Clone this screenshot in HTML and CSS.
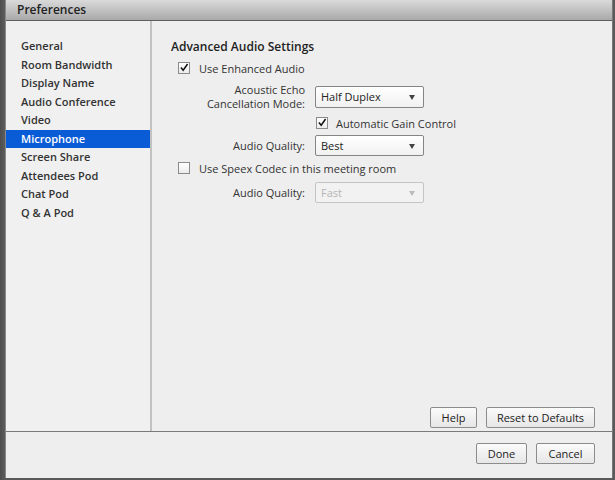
FILE: index.html
```html
<!DOCTYPE html>
<html>
<head>
<meta charset="utf-8">
<link rel="stylesheet" href="styles.css">
</head>
<body>
<div class="screen">
  <div class="dialog">
    <div class="titlebar">Preferences</div>
    <div class="main">
      <ul class="nav">
        <li>General</li>
        <li>Room Bandwidth</li>
        <li>Display Name</li>
        <li>Audio Conference</li>
        <li>Video</li>
        <li class="active">Microphone</li>
        <li>Screen Share</li>
        <li>Attendees Pod</li>
        <li>Chat Pod</li>
        <li>Q &amp; A Pod</li>
      </ul>
      <div class="panel">
        <div class="settings">
          <h2 class="heading">Advanced Audio Settings</h2>
          <label class="check-row">
            <span class="box"><svg viewBox="0 0 12 12"><path d="M2.3 6 L5 9.2 L10.3 1.8" fill="none" stroke="#111" stroke-width="1.8"/></svg></span>
            Use Enhanced Audio
          </label>
          <div class="field two-line">
            <span class="label">Acoustic Echo<br>Cancellation Mode:</span>
            <span class="select">Half Duplex<span class="arrow"></span></span>
          </div>
          <label class="check-row indent">
            <span class="box"><svg viewBox="0 0 12 12"><path d="M2.3 6 L5 9.2 L10.3 1.8" fill="none" stroke="#111" stroke-width="1.8"/></svg></span>
            Automatic Gain Control
          </label>
          <div class="field">
            <span class="label">Audio Quality:</span>
            <span class="select">Best<span class="arrow"></span></span>
          </div>
          <label class="check-row speex">
            <span class="box"></span>
            Use Speex Codec in this meeting room
          </label>
          <div class="field last">
            <span class="label">Audio Quality:</span>
            <span class="select disabled">Fast<span class="arrow"></span></span>
          </div>
        </div>
        <div class="panel-actions">
          <button class="btn help">Help</button>
          <button class="btn reset">Reset to Defaults</button>
        </div>
      </div>
    </div>
    <div class="footer">
      <button class="btn done">Done</button>
      <button class="btn cancel">Cancel</button>
    </div>
  </div>
</div>
</body>
</html>
```

FILE: styles.css
```css
* { box-sizing: border-box; }
html, body { margin: 0; padding: 0; }
body {
  width: 615px;
  height: 480px;
  overflow: hidden;
  background: #3c3c3c;
  font-family: "Open Sans", "Noto Sans", sans-serif;
  font-size: 11px;
  color: #2a2a2a;
}
.screen {
  width: 615px;
  height: 480px;
  padding: 0 2px 2px 5px;
  background: linear-gradient(90deg, #4d4d4d 0, #5a5a5a 4px, #5a5a5a 100%);
}
.dialog {
  width: 608px;
  height: 478px;
  display: flex;
  flex-direction: column;
  background: #eeeeee;
  border-left: 1px solid #888;
  border-right: 1px solid #777;
}
.titlebar {
  height: 21px;
  flex: none;
  padding-left: 11px;
  line-height: 20px;
  font-weight: 600;
  font-size: 12px;
  color: #222;
  background: linear-gradient(#dadada, #a9a9a9);
  border-bottom: 1px solid #5e5e5e;
}
.main {
  flex: 1;
  display: flex;
  border-bottom: 1px solid #7a7a7a;
}
.nav {
  list-style: none;
  margin: 0;
  padding: 16px 0 0 0;
  width: 146px;
  flex: none;
  background: #f0f0f0;
  border-right: 2px solid #c2c2c2;
}
.nav li {
  height: 18.5px;
  line-height: 18px;
  padding-left: 15px;
  font-weight: 600;
  color: #333;
}
.nav li.active {
  background: #0a5cd6;
  color: #fff;
}
.panel {
  flex: 1;
  display: flex;
  flex-direction: column;
  justify-content: space-between;
  padding: 18px 17px 3px 19px;
}
.heading {
  margin: 0 0 6px 0;
  font-size: 12px;
  font-weight: 600;
  color: #222;
  line-height: 16px;
}
.check-row {
  display: flex;
  align-items: center;
  gap: 9px;
  height: 12px;
  margin: 7px 0 0 7px;
  color: #333;
}
.check-row.indent { margin: 6px 0 0 145px; gap: 8px; }
.check-row.speex { margin-top: 6px; }
.box {
  width: 12px;
  height: 12px;
  flex: none;
  border: 1px solid #8b8b8b;
  background: linear-gradient(#ffffff, #ececec);
  display: flex;
}
.box svg { width: 11px; height: 11px; margin: -1px 0 0 0; }
.field {
  display: flex;
  align-items: center;
  margin-top: 6px;
}
.field.two-line { margin-top: 9px; }
.field.last { margin-top: 8px; }
.label {
  width: 134px;
  text-align: right;
  line-height: 14px;
  color: #333;
}
.select {
  position: relative;
  margin-left: 10px;
  width: 109px;
  height: 21px;
  line-height: 19px;
  padding-left: 5px;
  border: 1px solid #858585;
  border-radius: 2px;
  background: linear-gradient(#ffffff, #f1f1f1);
  color: #222;
}
.two-line .select { height: 22px; line-height: 20px; }
.select.disabled {
  color: #b5b5b5;
  border-color: #c4c4c4;
  background: #f2f2f2;
}
.arrow {
  position: absolute;
  right: 8px;
  top: 8px;
  width: 0;
  height: 0;
  border-left: 3.5px solid transparent;
  border-right: 3.5px solid transparent;
  border-top: 5px solid #444;
}
.disabled .arrow { border-top-color: #bbb; }
.btn {
  font-family: inherit;
  font-size: 11px;
  color: #222;
  height: 21px;
  padding: 0;
  border: 1px solid #8c8c8c;
  border-radius: 2px;
  background: linear-gradient(#fbfbfb, #e6e6e6);
}
.panel-actions {
  display: flex;
  justify-content: flex-end;
  gap: 9px;
}
.help { width: 47px; }
.reset { width: 109px; }
.footer {
  height: 46px;
  flex: none;
  display: flex;
  justify-content: flex-end;
  align-items: flex-start;
  gap: 9px;
  padding: 11px 17px 0 0;
}
.done { width: 51px; }
.cancel { width: 59px; }
```
